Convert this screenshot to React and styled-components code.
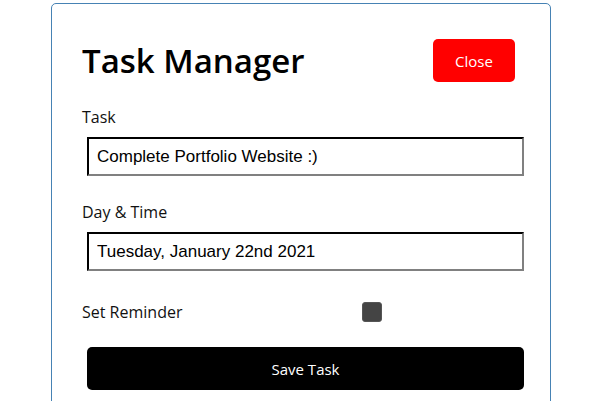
import styled, { createGlobalStyle } from 'styled-components';

const GlobalStyle = createGlobalStyle`
  * { box-sizing: border-box; }
  body {
    margin: 0;
    background: #fff;
    font-family: 'Open Sans', 'Lato', sans-serif;
  }
`;

const Container = styled.div`
  width: 500px;
  min-height: 420px;
  margin: 3px auto 0;
  border: 1px solid steelblue;
  border-radius: 5px;
  padding: 34px 30px 30px;
`;

const Header = styled.header`
  display: flex;
  align-items: center;
  justify-content: space-between;
  margin-bottom: 23px;
`;

const Title = styled.h1`
  margin: 0;
  font-size: 33px;
  font-weight: 600;
  color: #000;
`;

const Button = styled.button`
  border: none;
  border-radius: 5px;
  color: #fff;
  background: ${(p) => p.color};
  font-family: inherit;
  font-size: 15px;
  font-weight: 500;
  cursor: pointer;
  height: 43px;
  width: ${(p) => (p.block ? '437px' : '82px')};
  margin: ${(p) => (p.block ? '0 0 0 5px' : '0 5px 0 0')};
  display: block;
`;

const FormControl = styled.div`
  margin-bottom: ${(p) => (p.gap ? p.gap : '20px')};
`;

const Label = styled.label`
  display: block;
  font-size: 16px;
  color: #111;
  margin-bottom: 9px;
`;

const TextInput = styled.input`
  display: block;
  width: 437px;
  height: 39px;
  margin-left: 5px;
  padding: 3px 8px;
  border: 2px inset #767676;
  border-color: #333 #808080 #808080 #333;
  font-family: 'Liberation Sans', Arial, sans-serif;
  font-size: 17px;
  color: #000;
  outline: none;
`;

const CheckRow = styled.div`
  display: grid;
  grid-template-columns: 280px 20px;
  align-items: center;
  margin: 30px 0 24px;
`;

const CheckLabel = styled.label`
  font-size: 16px;
  color: #111;
`;

const Check = styled.input`
  appearance: none;
  width: 20px;
  height: 20px;
  margin: 0;
  border-radius: 3px;
  background: #444;
  border: 1px solid #555;
`;

export default function App() {
  return (
    <>
      <GlobalStyle />
      <Container>
        <Header>
          <Title>Task Manager</Title>
          <Button color="red">Close</Button>
        </Header>
        <form onSubmit={(e) => e.preventDefault()}>
          <FormControl gap="25px">
            <Label>Task</Label>
            <TextInput type="text" defaultValue="Complete Portfolio Website :)" />
          </FormControl>
          <FormControl gap="0">
            <Label>Day &amp; Time</Label>
            <TextInput type="text" defaultValue="Tuesday, January 22nd 2021" />
          </FormControl>
          <CheckRow>
            <CheckLabel>Set Reminder</CheckLabel>
            <Check type="checkbox" />
          </CheckRow>
          <Button color="#000" block>
            Save Task
          </Button>
        </form>
      </Container>
    </>
  );
}
